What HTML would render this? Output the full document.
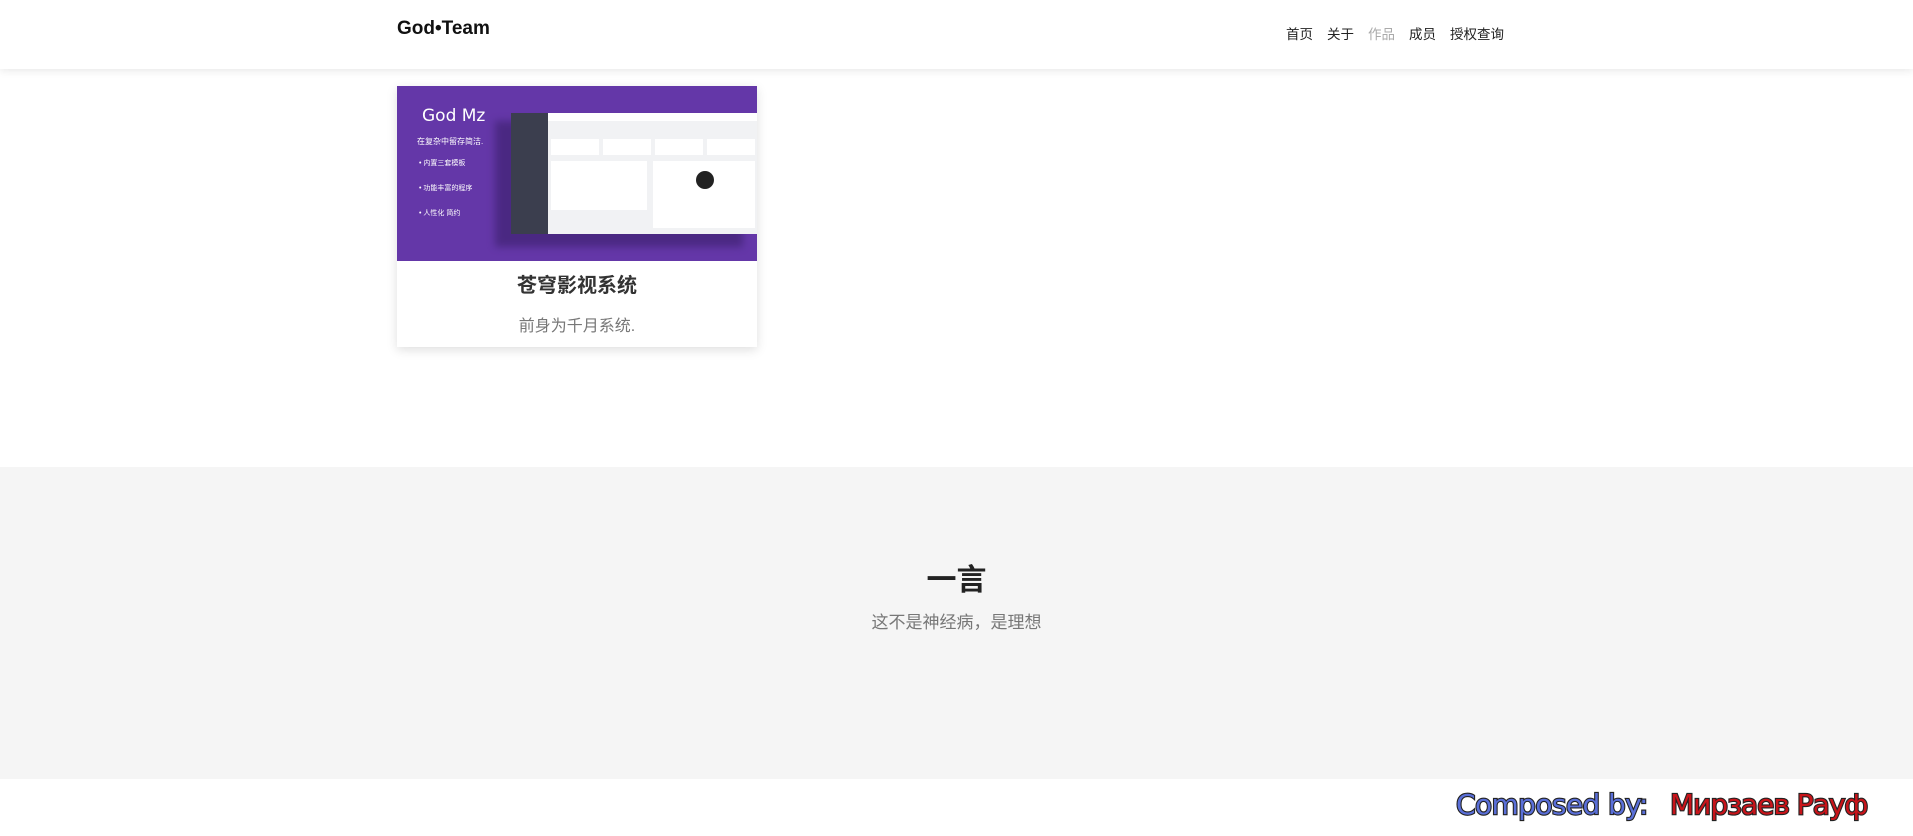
<!DOCTYPE html>
<html><head><meta charset="utf-8"><style>
*{margin:0;padding:0;box-sizing:border-box}
body{width:1913px;height:836px;background:#fff;font-family:"Liberation Sans","Noto Sans CJK SC",sans-serif;position:relative;overflow:hidden}
.hdr{position:absolute;left:0;top:0;width:1913px;height:69px;background:#fff;box-shadow:0 2px 8px rgba(0,0,0,.09);z-index:2}
.logo{position:absolute;left:397px;top:18px;font-size:19px;font-weight:bold;color:#111;font-family:"Liberation Sans",sans-serif}
.nav{position:absolute;top:23px;font-size:13.5px;color:#222}
.card{position:absolute;left:397px;top:86px;width:360px;height:261px;background:#fff;box-shadow:0 3px 10px rgba(0,0,0,.13)}
.img{position:absolute;left:0;top:0;width:360px;height:175px;background:#6437a8;overflow:hidden}
.t{position:absolute;color:#fff}
.ct{position:absolute;left:0;width:360px;text-align:center}
.gray{position:absolute;left:0;top:467px;width:1913px;height:312px;background:#f5f5f5}
.foot{position:absolute;top:788px;font-size:28px;font-family:"DejaVu Sans",sans-serif;letter-spacing:-1px;-webkit-text-stroke:2.2px #222;paint-order:stroke fill}
</style></head><body>
<div class="hdr">
<div class="logo">God•Team</div>
<div class="nav" style="left:1286px">首页</div>
<div class="nav" style="left:1327px">关于</div>
<div class="nav" style="left:1368px;color:#aaa">作品</div>
<div class="nav" style="left:1409px">成员</div>
<div class="nav" style="left:1450px">授权查询</div>
</div>
<div class="card">
<div class="img">
<div class="t" style="left:25px;top:20px;font-size:17px;font-family:'DejaVu Sans',sans-serif">God Mz</div>
<div class="t" style="left:20px;top:50px;font-size:8px">在复杂中留存简洁.</div>
<div class="t" style="left:22px;top:72px;font-size:7px">• 内置三套模板</div>
<div class="t" style="left:22px;top:97px;font-size:7px">• 功能丰富的程序</div>
<div class="t" style="left:22px;top:122px;font-size:7px">• 人性化 简约</div>
<div style="position:absolute;left:98px;top:35px;width:248px;height:126px;background:#3a1f6a;opacity:.6;filter:blur(4px)"></div>
<div style="position:absolute;left:114px;top:27px;width:37px;height:121px;background:#3b3e4e"></div>
<div style="position:absolute;left:151px;top:27px;width:209px;height:121px;background:#f1f2f4"></div>
<div style="position:absolute;left:151px;top:27px;width:209px;height:8px;background:#fff"></div>
<div style="position:absolute;left:154px;top:53px;width:48px;height:16px;background:#fff"></div>
<div style="position:absolute;left:206px;top:53px;width:48px;height:16px;background:#fff"></div>
<div style="position:absolute;left:258px;top:53px;width:48px;height:16px;background:#fff"></div>
<div style="position:absolute;left:310px;top:53px;width:48px;height:16px;background:#fff"></div>
<div style="position:absolute;left:154px;top:75px;width:96px;height:49px;background:#fff"></div>
<div style="position:absolute;left:256px;top:75px;width:102px;height:67px;background:#fff"></div>
<div style="position:absolute;left:299px;top:85px;width:18px;height:18px;border-radius:50%;background:#222"></div>
</div>
<div class="ct" style="top:183px;font-size:20px;font-weight:bold;color:#333">苍穹影视系统</div>
<div class="ct" style="top:226px;font-size:16px;color:#777">前身为千月系统.</div>
</div>
<div class="gray">
<div style="position:absolute;left:0;width:1913px;text-align:center;top:88px;font-size:30px;font-weight:bold;color:#222">一言</div>
<div style="position:absolute;left:0;width:1913px;text-align:center;top:141px;font-size:17px;color:#777">这不是神经病，是理想</div>
</div>
<div class="foot" style="left:1456px;color:#5a6fd8;letter-spacing:-0.6px">Composed by:</div>
<div class="foot" style="left:1670px;color:#c8141a">Мирзаев Рауф</div>
</body></html>
